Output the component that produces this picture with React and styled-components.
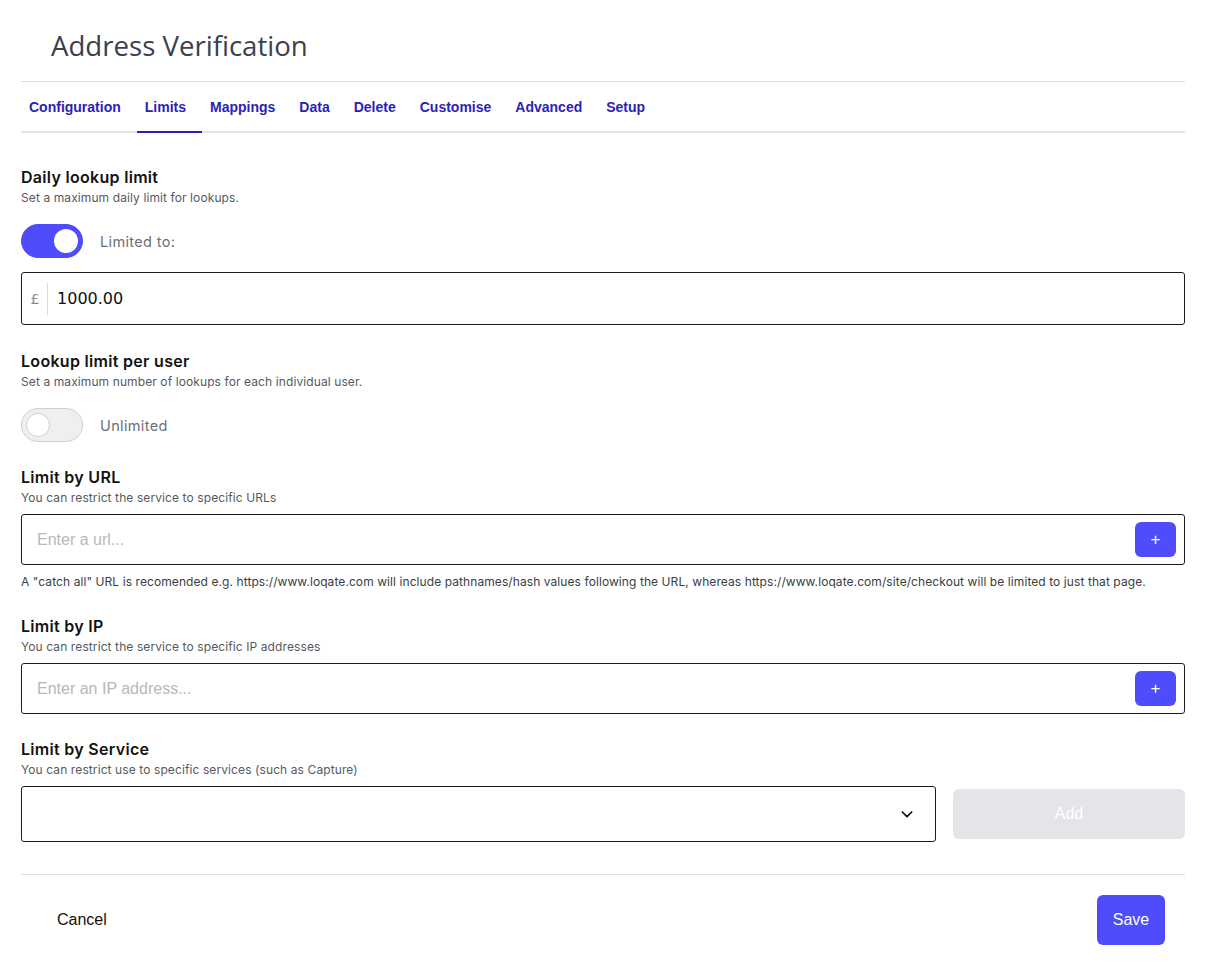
import React from "react";
import styled, { createGlobalStyle } from "styled-components";

const Global = createGlobalStyle`
  html, body { margin: 0; padding: 0; background: #fff; }
  body { font-family: "Liberation Sans", Arial, sans-serif; }
  * { box-sizing: border-box; }
`;

const Page = styled.div`
  width: 1164px;
  margin-left: 21px;
`;

const Title = styled.h1`
  margin: 0;
  padding: 26px 0 0 30px;
  height: 82px;
  font-family: "Open Sans", "Noto Sans", sans-serif;
  font-weight: 400;
  font-size: 27.6px;
  line-height: 38px;
  color: #394150;
  border-bottom: 1px solid #dcdcdc;
`;

const TabBar = styled.nav`
  display: flex;
  height: 51px;
  border-bottom: 2px solid #e4e4e8;
`;

const Tab = styled.div`
  display: flex;
  align-items: center;
  padding: 0 16px 0 8px;
  font-family: "Liberation Sans", Arial, sans-serif;
  font-weight: 700;
  font-size: 14px;
  color: #2b22b5;
  margin-bottom: -2px;
  border-bottom: 2px solid ${(p) => (p.$active ? "#2b22b5" : "transparent")};
`;

const Body = styled.div`
  padding-top: 34px;
`;

const Section = styled.section`
  margin-bottom: ${(p) => p.$mb ?? 24}px;
`;

const Label = styled.div`
  font-family: Inter, "Noto Sans", sans-serif;
  font-weight: 600;
  font-size: 16px;
  letter-spacing: 0.3px;
  line-height: 20px;
  color: #121212;
`;

const Sub = styled.div`
  font-family: Inter, "Noto Sans", sans-serif;
  font-size: 12px;
  letter-spacing: 0.1px;
  line-height: 14px;
  color: #555a60;
  margin-top: 4px;
`;

const ToggleRow = styled.div`
  display: flex;
  align-items: center;
  gap: 17px;
  margin-top: 19px;
`;

const Switch = styled.div`
  position: relative;
  width: 62px;
  height: 34px;
  border-radius: 17px;
  background: ${(p) => (p.$on ? "#4e4cfb" : "#efefef")};
  border: 1px solid ${(p) => (p.$on ? "#4e4cfb" : "#cfcfcf")};
`;

const Knob = styled.div`
  position: absolute;
  top: 4px;
  left: ${(p) => (p.$on ? "32px" : "4px")};
  width: 24px;
  height: 24px;
  border-radius: 50%;
  background: #fff;
  border: ${(p) => (p.$on ? "none" : "1px solid #cfcfcf")};
`;

const ToggleText = styled.span`
  font-family: Inter, "Noto Sans", sans-serif;
  font-size: 14.5px;
  letter-spacing: 0.35px;
  color: #6b6f76;
`;

const InputBox = styled.div`
  display: flex;
  align-items: center;
  height: ${(p) => p.$h || 51}px;
  margin-top: ${(p) => p.$mt || 9}px;
  border: 1px solid #1c1c1c;
  border-radius: 3px;
  padding: 0 8px 0 0;
`;

const Prefix = styled.span`
  font-family: "Noto Sans", sans-serif;
  font-size: 14px;
  color: #8a8a8a;
  padding: 0 8px 0 9px;
  height: 32px;
  line-height: 32px;
  border-right: 1px solid #dcdcdc;
`;

const Value = styled.span`
  font-family: "DejaVu Sans", sans-serif;
  font-size: 16px;
  color: #111;
  padding-left: 9px;
  flex: 1;
`;

const Placeholder = styled.span`
  flex: 1;
  padding-left: 15px;
  font-family: "Liberation Sans", Arial, sans-serif;
  font-size: 16px;
  color: #b8b8b8;
`;

const PlusButton = styled.button`
  width: 41px;
  height: 35px;
  border: none;
  border-radius: 6px;
  background: #4e4cfb;
  color: #fff;
  font-family: "Liberation Sans", Arial, sans-serif;
  font-size: 17px;
  line-height: 1;
  padding: 0;
`;

const Help = styled.div`
  font-family: Inter, "Noto Sans", sans-serif;
  font-size: 12px;
  letter-spacing: 0.08px;
  color: #3a3d42;
  margin-top: 9px;
  white-space: nowrap;
`;

const ServiceRow = styled.div`
  display: flex;
  align-items: center;
  gap: 17px;
  margin-top: 9px;
`;

const Select = styled.div`
  flex: 0 0 915px;
  height: 56px;
  border: 1px solid #1c1c1c;
  border-radius: 3px;
  display: flex;
  align-items: center;
  justify-content: flex-end;
  padding-right: 20px;
`;

const AddButton = styled.button`
  flex: 1;
  height: 50px;
  border: none;
  border-radius: 6px;
  background: #e4e4e9;
  color: #fff;
  font-family: "Liberation Sans", Arial, sans-serif;
  font-size: 16px;
`;

const Footer = styled.footer`
  margin-top: 32px;
  border-top: 1px solid #dcdcdc;
  display: flex;
  align-items: center;
  justify-content: space-between;
  padding: 20px 20px 0 36px;
`;

const Cancel = styled.span`
  font-family: "Liberation Sans", Arial, sans-serif;
  font-size: 16px;
  color: #111;
`;

const SaveButton = styled.button`
  width: 68px;
  height: 50px;
  border: none;
  border-radius: 6px;
  background: #4e4cfb;
  color: #fff;
  font-family: "Liberation Sans", Arial, sans-serif;
  font-size: 16px;
`;

const Chevron = () => (
  <svg width="16" height="16" viewBox="0 0 24 24" fill="none" stroke="#111" strokeWidth="2.6" strokeLinecap="round" strokeLinejoin="round">
    <path d="M5 9l7 7 7-7" />
  </svg>
);

const tabs = ["Configuration", "Limits", "Mappings", "Data", "Delete", "Customise", "Advanced", "Setup"];

export default function App() {
  return (
    <Page>
      <Global />
      <Title>Address Verification</Title>
      <TabBar>
        {tabs.map((t) => (
          <Tab key={t} $active={t === "Limits"}>{t}</Tab>
        ))}
      </TabBar>
      <Body>
        <Section $mb={26}>
          <Label>Daily lookup limit</Label>
          <Sub>Set a maximum daily limit for lookups.</Sub>
          <ToggleRow>
            <Switch $on><Knob $on /></Switch>
            <ToggleText>Limited to:</ToggleText>
          </ToggleRow>
          <InputBox $h={53} $mt={14}>
            <Prefix>£</Prefix>
            <Value>1000.00</Value>
          </InputBox>
        </Section>
        <Section $mb={25}>
          <Label>Lookup limit per user</Label>
          <Sub>Set a maximum number of lookups for each individual user.</Sub>
          <ToggleRow>
            <Switch><Knob /></Switch>
            <ToggleText>Unlimited</ToggleText>
          </ToggleRow>
        </Section>
        <Section $mb={27}>
          <Label>Limit by URL</Label>
          <Sub>You can restrict the service to specific URLs</Sub>
          <InputBox>
            <Placeholder>Enter a url...</Placeholder>
            <PlusButton>+</PlusButton>
          </InputBox>
          <Help>A "catch all" URL is recomended e.g. https://www.loqate.com will include pathnames/hash values following the URL, whereas https://www.loqate.com/site/checkout will be limited to just that page.</Help>
        </Section>
        <Section $mb={25}>
          <Label>Limit by IP</Label>
          <Sub>You can restrict the service to specific IP addresses</Sub>
          <InputBox>
            <Placeholder>Enter an IP address...</Placeholder>
            <PlusButton>+</PlusButton>
          </InputBox>
        </Section>
        <Section $mb={0}>
          <Label>Limit by Service</Label>
          <Sub>You can restrict use to specific services (such as Capture)</Sub>
          <ServiceRow>
            <Select><Chevron /></Select>
            <AddButton>Add</AddButton>
          </ServiceRow>
        </Section>
      </Body>
      <Footer>
        <Cancel>Cancel</Cancel>
        <SaveButton>Save</SaveButton>
      </Footer>
    </Page>
  );
}
